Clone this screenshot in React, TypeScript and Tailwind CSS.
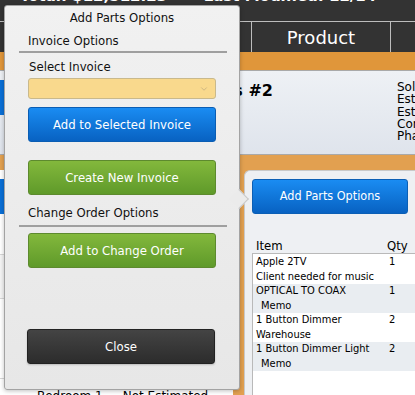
import { ChevronDown } from "lucide-react"

const font = { fontFamily: '"DejaVu Sans", Verdana, sans-serif' }
const cond = { fontFamily: '"DejaVu Sans Condensed", "DejaVu Sans", Tahoma, sans-serif' }

const rows = [
  { name: "Apple 2TV", qty: "1", note: "Client needed for music", alt: false, indent: false },
  { name: "OPTICAL TO COAX", qty: "1", note: "Memo", alt: true, indent: true },
  { name: "1 Button Dimmer", qty: "2", note: "Warehouse", alt: false, indent: false },
  { name: "1 Button Dimmer Light", qty: "2", note: "Memo", alt: true, indent: true },
]

function Background() {
  return (
    <div className="flex h-[395px] w-[415px] flex-col overflow-hidden bg-white text-black">
      <div className="relative h-[21px] shrink-0 overflow-hidden bg-[#333]">
        <div className="absolute -top-[15px] left-[20px] whitespace-nowrap text-[15px] font-bold text-white">
          Total: $12,512.23 &nbsp;&nbsp;&nbsp;&nbsp;&nbsp; Last Modified: 12/14
        </div>
      </div>
      <div className="flex h-[31px] shrink-0 border-t border-[#bdbdbd] bg-[#333] text-white">
        <div className="w-[252px] shrink-0 border-r border-[#bdbdbd]" />
        <div className="flex w-[139px] shrink-0 items-center justify-center border-r border-[#bdbdbd] text-[18px]">
          Product
        </div>
        <div className="flex-1" />
      </div>
      <div className="h-[18px] shrink-0 bg-[#e0963a]" />
      <div className="flex h-[85px] shrink-0 border-y border-[#a9a9a9] bg-gradient-to-b from-[#eef1f5] to-[#dfe4ec]">
        <div className="flex w-[30px] shrink-0 items-start pt-[9px]">
          <div className="h-[35px] w-[10px] bg-[#0a6fd6]" />
        </div>
        <div className="w-[243px] shrink-0 pt-[8px] text-right text-[16px] font-bold">Estimate Items #2</div>
        <div className="ml-[124px] pt-[10px] text-[12px] leading-[12.3px]">
          <div>Sold</div>
          <div>Estimated</div>
          <div>Estimated</div>
          <div>Contact</div>
          <div>Phase</div>
        </div>
      </div>
      <div className="h-[15px] shrink-0 bg-[#e2a050]" />
      <div className="flex flex-1 bg-[#e2a050]">
        <div className="flex w-[233px] shrink-0 flex-col bg-white">
          <div className="mt-[9px] h-[35px] w-[10px] bg-[#0a6fd6]" />
          <div className="mt-[40px] h-[45px] border-y border-[#d6d6d6] bg-[#f4f4f4]" />
          <div className="mt-[40px] h-[40px] border-b border-[#d6d6d6]" />
          <div className="mt-auto flex h-[5px] items-start overflow-visible text-[12px] leading-[12px]">
            <span className="ml-[37px]">Bedroom 1</span>
            <span className="ml-[20px]">Not Estimated</span>
          </div>
        </div>
        <div className="ml-[11px] flex flex-1 flex-col rounded-tl-[6px] border-l border-t border-[#c9c9c9] bg-[#eef0f3] pl-[7px] pt-[8px]">
          <button
            className="h-[35px] w-[156px] rounded-[3px] border border-[#0b5fb5] bg-gradient-to-b from-[#1a8cf2] to-[#0862c2] text-[12.5px] text-white"
            style={cond}
          >
            Add Parts Options
          </button>
          <div className="mt-[24px] flex text-[13px] leading-[16px]" style={cond}>
            <span className="w-[135px] pl-[4px]">Item</span>
            <span>Qty</span>
          </div>
          <div className="mt-[-1px] flex-1 border-l border-t border-[#b9b9b9] bg-white pt-[1px] text-[11px]" style={cond}>
            {rows.map((r) => (
              <div key={r.name} className={r.alt ? "bg-[#e9edf1]" : ""}>
                <div className="flex h-[14.5px] items-center">
                  <span className="w-[136px] pl-[3px]">{r.name}</span>
                  <span>{r.qty}</span>
                </div>
                <div className={"flex h-[14.5px] items-center " + (r.indent ? "pl-[8px]" : "pl-[3px]")}>
                  {r.note}
                </div>
              </div>
            ))}
          </div>
        </div>
      </div>
    </div>
  )
}

function Popover() {
  return (
    <div
      className="absolute left-[4px] top-[5px] flex h-[385px] w-[236px] flex-col rounded-[3px] border border-[#a3a3a3] bg-gradient-to-b from-[#f1f1f1] to-[#e7e7e7] text-[13px] shadow-[0_1px_4px_rgba(0,0,0,0.25)]"
      style={cond}
    >
      <div className="absolute right-[-7px] top-[186px] h-[14px] w-[14px] rotate-45 border-r border-t border-[#c8c8c8] bg-[#ebebeb]" />
      <div className="pt-[4px] text-center leading-[16px] text-[#111]">Add Parts Options</div>
      <div className="pl-[23px] pt-[7px] leading-[16px] text-[#111]">Invoice Options</div>
      <div className="ml-[14px] mr-[12px] mt-[2px] h-[2px] bg-[#9f9f9f]" />
      <div className="pl-[24px] pt-[6px] leading-[16px] text-[#111]">Select Invoice</div>
      <div className="relative z-10 ml-[23px] mt-[3px] flex h-[21px] w-[188px] items-center justify-end rounded-[3px] border border-[#c9b98c] bg-[#f9d98d] pr-[6px]">
        <ChevronDown className="size-[10px] text-[#b3a27a]" strokeWidth={1.5} />
      </div>
      <div className="relative z-10 ml-[23px] flex w-[188px] flex-col gap-[18px] pt-[8px]">
        <button className="h-[35px] rounded-[3px] border border-[#0a5db3] bg-gradient-to-b from-[#1a8cf2] to-[#0862c2] text-white">
          Add to Selected Invoice
        </button>
        <button className="h-[35px] rounded-[3px] border border-[#5d8a2e] bg-gradient-to-b from-[#83b83c] to-[#5f9a2a] text-white">
          Create New Invoice
        </button>
      </div>
      <div className="pl-[23px] pt-[10px] leading-[16px] text-[#111]">Change Order Options</div>
      <div className="ml-[14px] mr-[12px] mt-[4px] h-[2px] bg-[#9f9f9f]" />
      <button className="ml-[23px] mt-[6px] h-[35px] w-[188px] rounded-[3px] border border-[#5d8a2e] bg-gradient-to-b from-[#83b83c] to-[#5f9a2a] text-white">
        Add to Change Order
      </button>
      <button className="ml-[22px] mt-[61px] h-[35px] w-[188px] rounded-[3px] border border-[#222] bg-gradient-to-b from-[#444] to-[#2c2c2c] text-white shadow-[0_1px_2px_rgba(0,0,0,0.2)]">
        Close
      </button>
    </div>
  )
}

export default function App() {
  return (
    <div className="relative h-[395px] w-[415px] overflow-hidden" style={font}>
      <Background />
      <Popover />
    </div>
  )
}
